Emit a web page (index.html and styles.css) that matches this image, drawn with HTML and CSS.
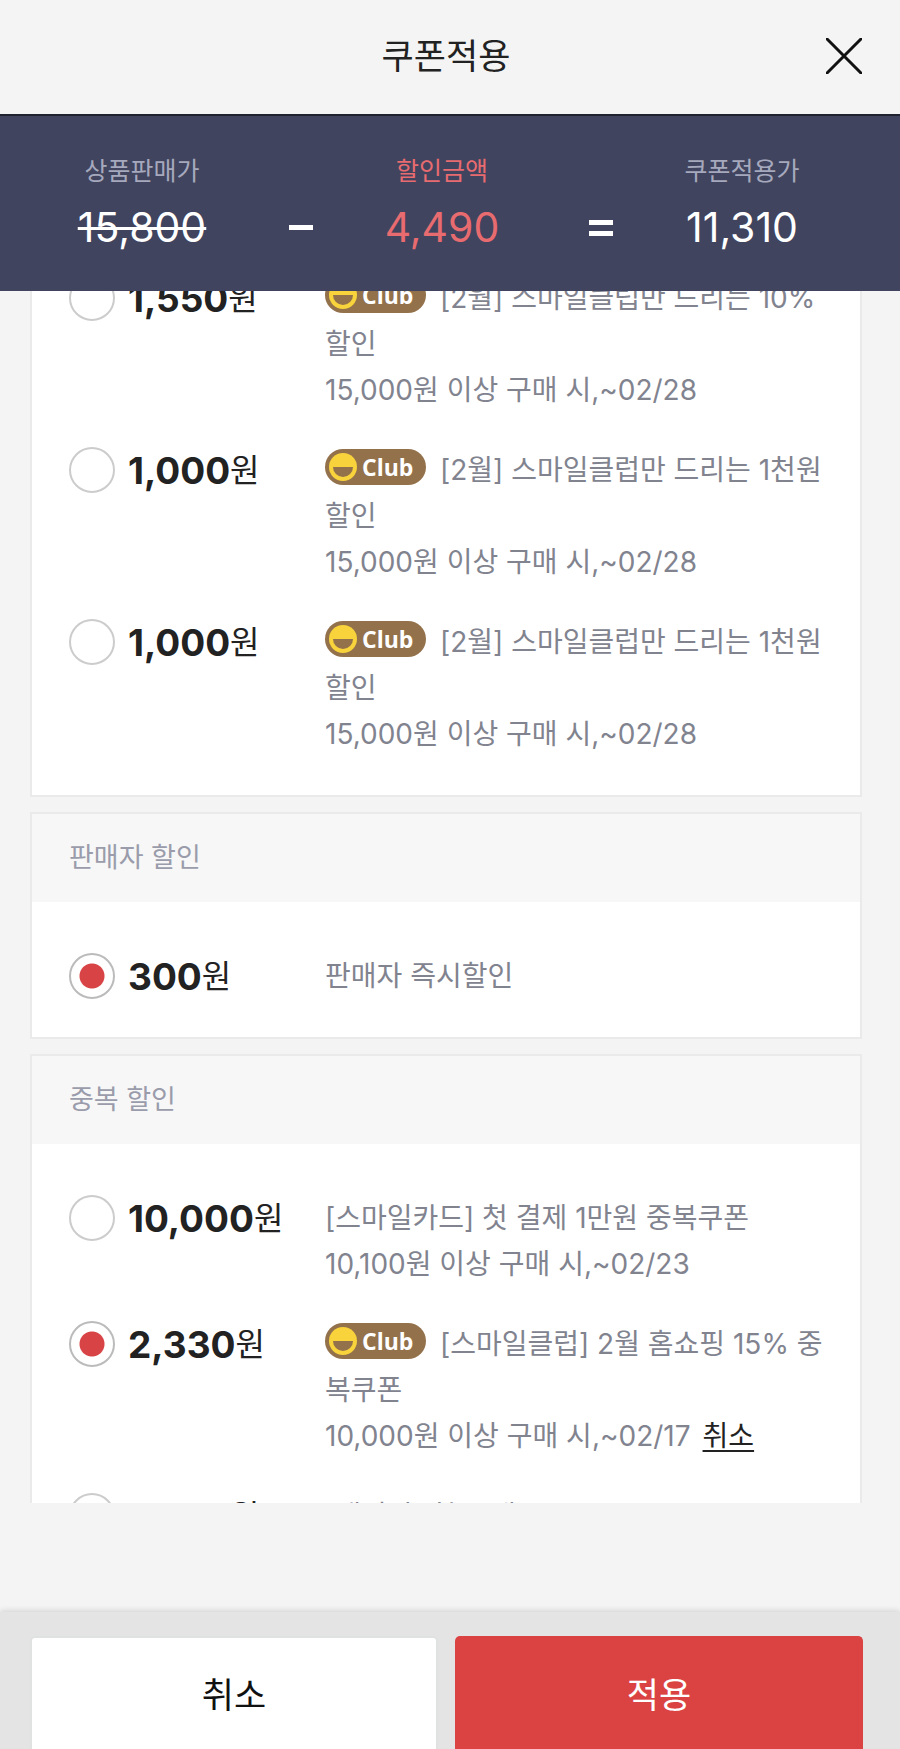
FILE: index.html
```html
<!DOCTYPE html>
<html lang="ko">

<head>
  <meta charset="utf-8">
  <meta name="viewport" content="width=device-width, initial-scale=1">
  <title>쿠폰적용</title>
  <link rel="stylesheet" href="styles.css">
</head>

<body>
  <svg class="defs" aria-hidden="true">
    <symbol id="smile" viewBox="0 0 28 28">
      <circle cx="14" cy="14" r="14" fill="#f8d33c"/>
      <path d="M4 14h20a10 10 0 0 1-20 0z" fill="#93714a"/>
    </symbol>
  </svg>

  <header class="header">
    <h1>쿠폰적용</h1>
    <button class="close" type="button" aria-label="닫기">
      <svg viewBox="0 0 36 36" width="36" height="36"><path d="M1 1l34 34M35 1L1 35" stroke="#111" stroke-width="3" stroke-linecap="round" fill="none"/></svg>
    </button>
  </header>

  <section class="summary">
    <div class="sum">
      <span class="sum-label">상품판매가</span>
      <del class="sum-value">15,800</del>
    </div>
    <div class="op"><span class="bar"></span></div>
    <div class="sum discount">
      <span class="sum-label">할인금액</span>
      <span class="sum-value">4,490</span>
    </div>
    <div class="op"><span class="bar"></span><span class="bar"></span></div>
    <div class="sum">
      <span class="sum-label">쿠폰적용가</span>
      <span class="sum-value">11,310</span>
    </div>
  </section>

  <main class="list">
    <section class="card scrolled">
      <div class="rows">
        <div class="row">
          <label class="pick"><input type="radio" name="coupon"><span class="price"><b>1,550</b>원</span></label>
          <div class="desc">
            <p><span class="club"><svg class="face"><use href="#smile"/></svg>Club</span>[2월] 스마일클럽만 드리는 10% 할인</p>
            <p>15,000원 이상 구매 시,~02/28</p>
          </div>
        </div>
        <div class="row">
          <label class="pick"><input type="radio" name="coupon"><span class="price"><b>1,000</b>원</span></label>
          <div class="desc">
            <p><span class="club"><svg class="face"><use href="#smile"/></svg>Club</span>[2월] 스마일클럽만 드리는 1천원 할인</p>
            <p>15,000원 이상 구매 시,~02/28</p>
          </div>
        </div>
        <div class="row">
          <label class="pick"><input type="radio" name="coupon"><span class="price"><b>1,000</b>원</span></label>
          <div class="desc">
            <p><span class="club"><svg class="face"><use href="#smile"/></svg>Club</span>[2월] 스마일클럽만 드리는 1천원 할인</p>
            <p>15,000원 이상 구매 시,~02/28</p>
          </div>
        </div>
      </div>
    </section>

    <section class="card">
      <h2>판매자 할인</h2>
      <div class="rows">
        <div class="row">
          <label class="pick"><input type="radio" name="seller" checked><span class="price"><b>300</b>원</span></label>
          <div class="desc">
            <p>판매자 즉시할인</p>
          </div>
        </div>
      </div>
    </section>

    <section class="card">
      <h2>중복 할인</h2>
      <div class="rows">
        <div class="row">
          <label class="pick"><input type="radio" name="extra"><span class="price"><b>10,000</b>원</span></label>
          <div class="desc">
            <p>[스마일카드] 첫 결제 1만원 중복쿠폰</p>
            <p>10,100원 이상 구매 시,~02/23</p>
          </div>
        </div>
        <div class="row">
          <label class="pick"><input type="radio" name="extra" checked><span class="price"><b>2,330</b>원</span></label>
          <div class="desc">
            <p><span class="club"><svg class="face"><use href="#smile"/></svg>Club</span>[스마일클럽] 2월 홈쇼핑 15% 중복쿠폰</p>
            <p>10,000원 이상 구매 시,~02/17<a class="cancel" href="#">취소</a></p>
          </div>
        </div>
        <div class="row">
          <label class="pick"><input type="radio" name="extra"><span class="price"><b>1,000</b>원</span></label>
          <div class="desc">
            <p>[패밀리] 첫 구매 중복쿠폰 10%</p>
          </div>
        </div>
      </div>
    </section>
  </main>

  <footer class="footer">
    <button class="btn" type="button">취소</button>
    <button class="btn apply" type="button">적용</button>
  </footer>
</body>

</html>
```
FILE: styles.css
```css
* {
  box-sizing: border-box;
}

body {
  margin: 0;
  height: 100vh;
  display: flex;
  flex-direction: column;
  overflow: hidden;
  background: #f4f4f4;
  color: #222;
  font-family: Inter, "Noto Sans CJK KR", sans-serif;
  font-size: 28px;
  line-height: 46px;
}

h1, h2, p {
  margin: 0;
  font-weight: 400;
}

button {
  font-family: inherit;
  cursor: pointer;
}

.defs {
  display: none;
}

/* header */
.header {
  display: grid;
  grid-template-columns: 1fr auto 1fr;
  align-items: center;
  padding: 33px 38px 35px 30px;
  border-bottom: 2px solid #20222f;
}

.header h1 {
  grid-column: 2;
  font-size: 35px;
}

.close {
  justify-self: end;
  display: flex;
  padding: 0;
  border: 0;
  background: none;
}

/* price summary */
.summary {
  display: grid;
  grid-template-columns: repeat(5, 1fr);
  align-items: end;
  padding: 32px 83px 30px 67px;
  background: #40445e;
  color: #fff;
}

.sum {
  display: flex;
  flex-direction: column;
  align-items: center;
}

.sum-label {
  font-size: 25px;
  color: #a6a9bd;
}

.sum-value {
  font-size: 41px;
  line-height: 67px;
  text-decoration-thickness: 3px;
}

.discount, .discount .sum-label {
  color: #e86b70;
}

.op {
  height: 67px;
  padding-left: 72px;
  display: flex;
  flex-direction: column;
  justify-content: center;
  gap: 6px;
}

.bar {
  width: 24px;
  height: 5px;
  background: #fff;
}

/* coupon list */
.list {
  flex: 1;
  min-height: 0;
  overflow: hidden;
  display: flex;
  flex-direction: column;
  gap: 15px;
  padding: 0 38px 0 30px;
  margin-bottom: 109px;
}

.card {
  flex: none;
  border: 2px solid #eaeaea;
  background: #fff;
}

.scrolled {
  margin-top: -69px;
}

.card h2 {
  padding: 21px 37px;
  background: #f7f7f7;
  color: #9a9cab;
  font-size: 27px;
}

.rows {
  display: flex;
  flex-direction: column;
  gap: 34px;
  padding: 51px 30px 38px 37px;
}

.row {
  display: grid;
  grid-template-columns: 256px 1fr;
}

.pick {
  display: flex;
  align-items: center;
  gap: 13px;
  height: 46px;
}

.pick input {
  appearance: none;
  flex: none;
  width: 46px;
  height: 46px;
  margin: 0;
  border: 2px solid #ccc;
  border-radius: 50%;
  background: #fff;
}

.pick input:checked {
  border-color: #bbb;
  background: radial-gradient(circle, #d84345 12px, #fff 13px);
}

.price {
  display: flex;
  align-items: center;
  padding-top: 2px;
  font-size: 32px;
}

.price b {
  font-size: 37px;
  font-weight: 700;
}

.desc {
  color: #81838f;
}

.club {
  display: inline-flex;
  align-items: center;
  gap: 5px;
  width: 101px;
  height: 36px;
  padding-left: 4px;
  margin-right: 14px;
  border-radius: 18px;
  background: #93714a;
  color: #fff;
  font-family: "Open Sans", sans-serif;
  font-size: 23px;
  font-weight: 700;
  line-height: 36px;
  vertical-align: -1px;
}

.face {
  width: 28px;
  height: 28px;
}

.cancel {
  margin-left: 12px;
  color: #222;
  text-underline-offset: 4px;
}

/* bottom buttons */
.footer {
  display: grid;
  grid-template-columns: 1fr 1fr;
  gap: 17px;
  padding: 24px 37px 0 30px;
  background: #e4e4e4;
  box-shadow: 0 -1px 6px rgba(0, 0, 0, 0.15);
}

.btn {
  height: 113px;
  padding-bottom: 4px;
  border: 2px solid #e0e2e2;
  border-bottom: 0;
  border-radius: 5px 5px 0 0;
  background: #fff;
  color: #111;
  font-size: 35px;
}

.apply {
  border-color: #db4343;
  background: #db4343;
  color: #fff;
}
```
